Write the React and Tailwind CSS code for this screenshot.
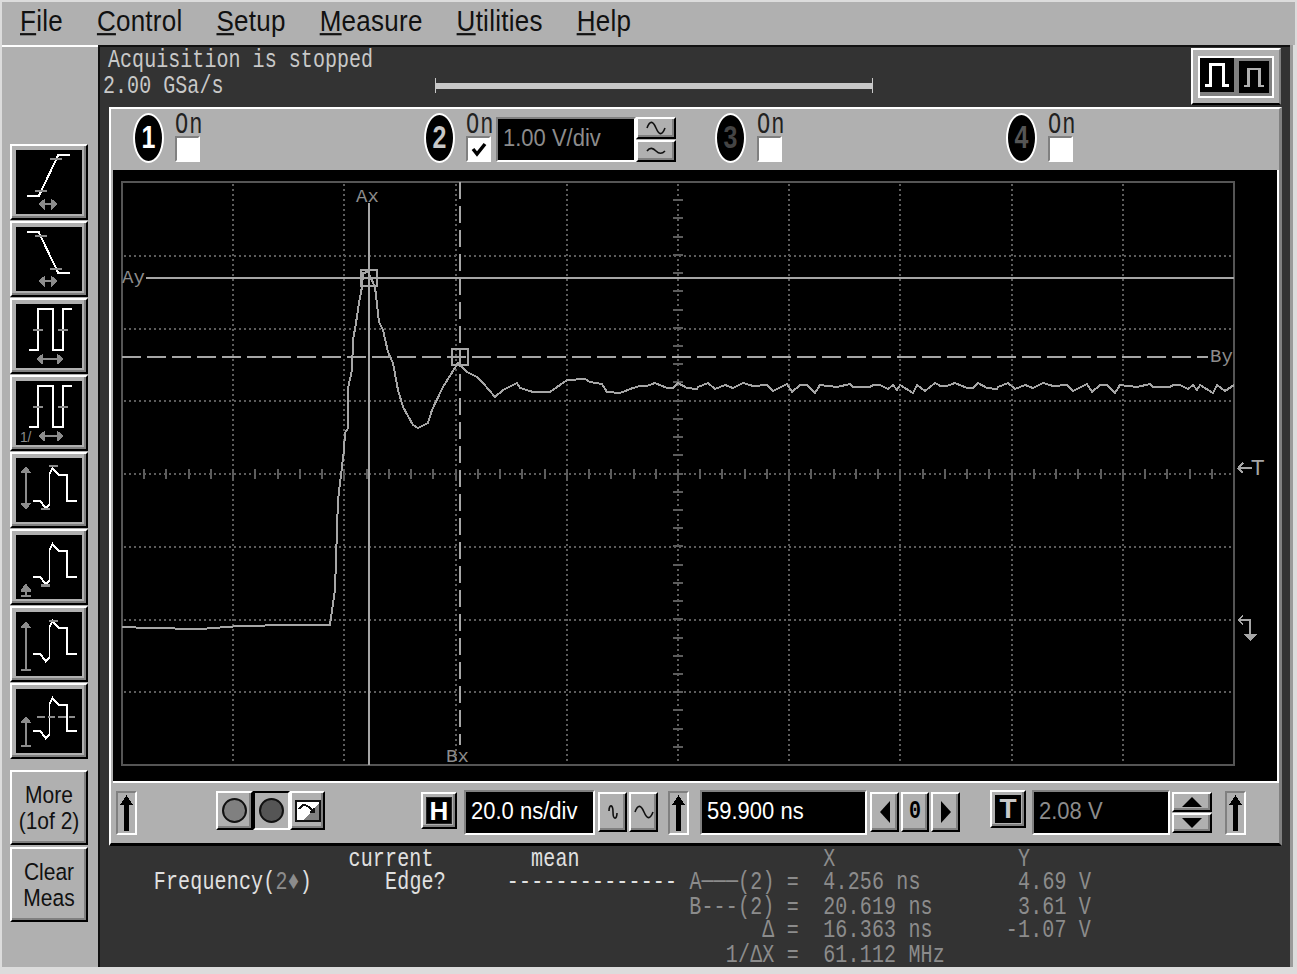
import React from 'react';

const sp = (n) => ' '.repeat(n);
const GRAY = '#8c8c8c';

// trace points read off the picture
const tracePts = [
  [122, 627], [150, 628], [200, 629], [240, 626], [290, 625], [330, 625], [335, 590], [338, 500], [344, 450], [345, 433],
  [348, 428], [348, 388], [352, 370], [353, 340], [356, 323], [359, 303], [362, 287], [363, 273], [368, 272], [375, 287],
  [379, 322], [383, 330], [388, 352], [393, 363], [398, 390], [403, 407], [413, 425], [418, 428], [428, 423], [432, 410],
  [443, 387], [458, 363], [467, 372], [477, 377], [483, 383], [495, 397], [503, 390], [517, 383], [520, 388], [533, 392],
  [550, 392], [567, 380], [585, 379], [590, 382], [602, 384], [607, 392], [620, 393], [633, 388],
];
const ripple = [
  [0, 386], [7, 386], [15, 383], [27, 388], [33, 388], [38, 383], [47, 388], [57, 389], [58, 387], [68, 383], [75, 389],
  [85, 385], [93, 388], [103, 383], [113, 386], [127, 385], [133, 391], [147, 384], [152, 392], [160, 385], [167, 385],
  [175, 393], [180, 385], [197, 387], [210, 384], [213, 387], [230, 387], [233, 385], [240, 385], [248, 389], [253, 385],
  [257, 390], [260, 385], [273, 393], [277, 385], [285, 391], [295, 383], [299, 385],
];
[0, 300].forEach((off) => {
  ripple.forEach(([x, y]) => {
    if (640 + off + x <= 1234) tracePts.push([640 + off + x, y]);
  });
});
tracePts.push([1234, 385]);
const tracePath = tracePts.map((p) => p.join(',')).join(' ');

const vDivs = [233, 344, 456, 567, 789, 900, 1012, 1123];
const hDivs = [256, 329, 401, 547, 620, 692];
const vTicks = Array.from({ length: 31 }, (_, i) => 182 + (i + 1) * 18.22);
const hTicks = Array.from({ length: 49 }, (_, i) => 122 + (i + 1) * 22.24);

function Scope() {
  return (
    <svg viewBox="113 170 1164 611" className="block w-[1164px] h-[611px]" shapeRendering="crispEdges" fontFamily="'Liberation Mono', monospace" fontSize="19">
      <rect x="122" y="182" width="1112" height="583" fill="none" stroke="#555555" strokeWidth="2" />
      {vDivs.map((x) => <line key={x} x1={x} x2={x} y1="184" y2="764" stroke="#5c5c5c" strokeWidth="2" strokeDasharray="2 3" />)}
      {hDivs.map((y) => <line key={y} x1="124" x2="1232" y1={y} y2={y} stroke="#5c5c5c" strokeWidth="2" strokeDasharray="2 3" />)}
      <line x1="678" x2="678" y1="184" y2="764" stroke="#5c5c5c" strokeWidth="2" strokeDasharray="2 3" />
      <line x1="124" x2="1232" y1="474" y2="474" stroke="#5c5c5c" strokeWidth="2" strokeDasharray="2 3" />
      {vTicks.map((y) => <line key={y} x1="673" x2="683" y1={y} y2={y} stroke="#5c5c5c" strokeWidth="2" />)}
      {hTicks.map((x) => <line key={x} x1={x} x2={x} y1="469" y2="479" stroke="#5c5c5c" strokeWidth="2" />)}
      <polyline points={tracePath} fill="none" stroke="#a6a6a6" strokeWidth="2" />
      <line x1="369" x2="369" y1="203" y2="765" stroke="#a6a6a6" strokeWidth="2" />
      <line x1="146" x2="1234" y1="278" y2="278" stroke="#a6a6a6" strokeWidth="2" />
      <line x1="460" x2="460" y1="182" y2="745" stroke="#a6a6a6" strokeWidth="2" strokeDasharray="17 7" />
      <line x1="122" x2="1208" y1="357" y2="357" stroke="#a6a6a6" strokeWidth="2" strokeDasharray="19 6" />
      <rect x="361" y="270" width="16" height="16" fill="none" stroke="#a6a6a6" strokeWidth="2" />
      <rect x="452" y="349" width="16" height="16" fill="none" stroke="#a6a6a6" strokeWidth="2" />
      <text x="356" y="202" fill="#8c8c8c">Ax</text>
      <text x="122" y="283" fill="#8c8c8c">Ay</text>
      <text x="1210" y="362" fill="#8c8c8c">By</text>
      <text x="446" y="762" fill="#8c8c8c">Bx</text>
      <path d="M1238 468H1252M1238 468L1243 463M1238 468L1243 473" fill="none" stroke="#a6a6a6" strokeWidth="1.5" />
      <text x="1251" y="475" fill="#a6a6a6" fontSize="22" fontFamily="'Liberation Sans', sans-serif">T</text>
      <path d="M1238 620H1250V634M1238 620L1243 616M1238 620L1243 624" fill="none" stroke="#a6a6a6" strokeWidth="1.5" />
      <polygon points="1243,634 1257,634 1250,641" fill="#a6a6a6" />
    </svg>
  );
}

const PULSE = '0,0 8,0 13,7 17,3 17,-28 20,-34 26,-27 35,-27 35,0 45,0';

function IconFrame({ children }) {
  return (
    <svg viewBox="0 0 65 65" className="block w-full h-full" shapeRendering="crispEdges" fill="none">
      {children}
    </svg>
  );
}

function VArrow({ y1, y2, top = true, bottomHead = false, bar = false }) {
  return (
    <g stroke={GRAY} fill={GRAY}>
      <line x1="9" x2="9" y1={y1} y2={y2} strokeWidth="2" />
      {top && <polygon points={`9,${y1} 14,${y1 + 6} 4,${y1 + 6}`} />}
      {bottomHead && <polygon points={`9,${y2} 14,${y2 - 6} 4,${y2 - 6}`} />}
      {bar && <line x1="4" x2="14" y1={y2} y2={y2} strokeWidth="2" />}
    </g>
  );
}

function HArrow({ x1, x2, y = 55 }) {
  return (
    <g stroke={GRAY} fill={GRAY}>
      <line x1={x1} x2={x2} y1={y} y2={y} strokeWidth="2" />
      <polygon points={`${x1},${y} ${x1 + 6},${y - 5} ${x1 + 6},${y + 5}`} />
      <polygon points={`${x2},${y} ${x2 - 6},${y - 5} ${x2 - 6},${y + 5}`} />
    </g>
  );
}

const icons = [
  <IconFrame key="rise">
    <polyline points="10,47 22,47 42,5 54,5" stroke="#fff" strokeWidth="2" />
    <path d="M34 9H46M18 42H30" stroke={GRAY} strokeWidth="2" />
    <HArrow x1={22} x2={41} />
  </IconFrame>,
  <IconFrame key="fall">
    <polyline points="10,5 22,5 42,47 54,47" stroke="#fff" strokeWidth="2" />
    <path d="M18 9H30M34 43H46" stroke={GRAY} strokeWidth="2" />
    <HArrow x1={22} x2={41} />
  </IconFrame>,
  <IconFrame key="period">
    <polyline points="12,47 21,47 21,5 37,5 37,47 47,47 47,5 56,5" stroke="#fff" strokeWidth="2" />
    <path d="M16 26H26M42 26H52" stroke={GRAY} strokeWidth="2" />
    <HArrow x1={20} x2={47} y={56} />
  </IconFrame>,
  <IconFrame key="freq">
    <polyline points="12,47 21,47 21,5 37,5 37,47 47,47 47,5 56,5" stroke="#fff" strokeWidth="2" />
    <path d="M16 26H26M42 26H52" stroke={GRAY} strokeWidth="2" />
    <text x="3" y="62" fill={GRAY} stroke="none" fontSize="14" fontFamily="'Liberation Sans', sans-serif">1/</text>
    <HArrow x1={22} x2={47} y={56} />
  </IconFrame>,
  <IconFrame key="pp">
    <polyline points={PULSE} transform="translate(16 44)" stroke="#fff" strokeWidth="2" />
    <path d="M32 8H42M24 52H34" stroke={GRAY} strokeWidth="2" />
    <VArrow y1={9} y2={52} bottomHead />
  </IconFrame>,
  <IconFrame key="min">
    <polyline points={PULSE} transform="translate(16 43)" stroke="#fff" strokeWidth="2" />
    <path d="M24 51H34" stroke={GRAY} strokeWidth="3" />
    <VArrow y1={50} y2={62} bar />
    <path d="M4 57H14" stroke={GRAY} strokeWidth="2" />
  </IconFrame>,
  <IconFrame key="max">
    <polyline points={PULSE} transform="translate(16 43)" stroke="#fff" strokeWidth="2" />
    <path d="M32 9H42" stroke={GRAY} strokeWidth="2" />
    <VArrow y1={10} y2={59} bar />
  </IconFrame>,
  <IconFrame key="avg">
    <polyline points={PULSE} transform="translate(16 43)" stroke="#fff" strokeWidth="2" />
    <path d="M20 28H59" stroke={GRAY} strokeWidth="2" strokeDasharray="8 3" />
    <VArrow y1={28} y2={58} bar />
  </IconFrame>,
];

const raised = 'border-2 border-t-white border-l-white border-b-black border-r-black bg-[#b0b0b0] shadow-[inset_-2px_-2px_0_#808080]';
const sunken = 'border-2 border-t-[#808080] border-l-[#808080] border-b-white border-r-white';

function SideButton({ children }) {
  return (
    <div className={`w-[78px] h-[76px] p-[4px] ${raised}`}>
      <div className="w-full h-full bg-black">{children}</div>
    </div>
  );
}

function TextButton({ lines }) {
  return (
    <div className={`w-[78px] h-[75px] flex flex-col items-center justify-center text-[21px] leading-[26px] text-[#111] ${raised}`}>
      {lines.map((l) => <span key={l} className="block scale-y-[1.15]">{l}</span>)}
    </div>
  );
}

function Channel({ n, color, checked, children }) {
  return (
    <div className="flex items-start">
      <div className="mt-[4px] w-[31px] h-[50px] rounded-[50%] bg-black border-2 border-white flex items-center justify-center font-bold text-[25px]" style={{ color }}>
        <span className="block scale-y-[1.25]">{n}</span>
      </div>
      <div className="ml-[11px] w-[30px] flex flex-col">
        <span className="block h-[27px] pt-[6px] leading-[14px] text-[22px] text-[#222] font-['Liberation_Mono',monospace] origin-top scale-y-[1.35] tracking-[1px]">On</span>
        <div className={`w-[25px] h-[26px] bg-white ${sunken} flex items-center justify-center`}>
          {checked && (
            <svg viewBox="0 0 18 18" className="w-[18px] h-[18px]">
              <path d="M3 9L7 14L15 4" fill="none" stroke="#000" strokeWidth="3.5" />
            </svg>
          )}
        </div>
      </div>
      {children}
    </div>
  );
}

function UpArrow({ className }) {
  return (
    <div className={`w-[21px] h-[44px] flex items-center justify-center ${sunken} ${className}`}>
      <svg viewBox="0 0 15 38" className="w-[15px] h-[38px]" shapeRendering="crispEdges">
        <polygon points="7.5,1 14,11 1,11" fill="#000" />
        <rect x="5" y="10" width="5" height="27" fill="#000" />
      </svg>
    </div>
  );
}

function Readout({ className, text, dim }) {
  return (
    <div className={`h-[45px] bg-black ${sunken} flex items-center pl-[5px] pb-[4px] text-[22px] ${dim ? 'text-[#8c8c8c]' : 'text-white'} ${className}`}>
      <span className="block scale-y-[1.1] whitespace-pre">{text}</span>
    </div>
  );
}

function SineTall() {
  return (
    <svg viewBox="0 0 10 14" className="w-[10px] h-[14px]">
      <path d="M1 6C1 -1 5 -1 5 7S9 15 9 8" fill="none" stroke="#111" strokeWidth="1.6" />
    </svg>
  );
}

function SineWide() {
  return (
    <svg viewBox="0 0 20 14" className="w-[20px] h-[14px]">
      <path d="M1 7C4 -1 7 0 10 7S16 15 19 7" fill="none" stroke="#111" strokeWidth="1.6" />
    </svg>
  );
}

function SineFlat() {
  return (
    <svg viewBox="0 0 20 8" className="w-[20px] h-[8px]">
      <path d="M1 4C4 0 7 1 10 4S16 7 19 4" fill="none" stroke="#111" strokeWidth="1.6" />
    </svg>
  );
}

export default function App() {
  return (
    <div className="w-[1297px] h-[974px] bg-[#dcdcdc] p-[2px] overflow-hidden font-['Liberation_Sans',sans-serif]">
      <div className="h-full bg-[#b0b0b0] flex flex-col">
        {/* Menu bar */}
        <nav className="h-[43px] shrink-0 flex items-center gap-[34px] pl-[18px] pb-[5px] text-[26px] tracking-[0.25px] leading-none text-[#111]">
          <span className="block scale-y-[1.1]"><u>F</u>ile</span>
          <span className="block scale-y-[1.1]"><u>C</u>ontrol</span>
          <span className="block scale-y-[1.1]"><u>S</u>etup</span>
          <span className="block scale-y-[1.1]"><u>M</u>easure</span>
          <span className="block scale-y-[1.1]"><u>U</u>tilities</span>
          <span className="block scale-y-[1.1]"><u>H</u>elp</span>
        </nav>

        <div className="flex-1 flex min-h-0 border-b-[5px] border-[#dcdcdc]">
          {/* Left measurement buttons */}
          <aside className="w-[96px] shrink-0 border-t-2 border-white pt-[97px] pl-[8px] flex flex-col">
            <div className="flex flex-col gap-[1px]">
              {icons.map((ic) => <SideButton key={ic.key}>{ic}</SideButton>)}
            </div>
            <div className="mt-[11px] flex flex-col gap-[2px]">
              <TextButton lines={['More', '(1of 2)']} />
              <TextButton lines={['Clear', 'Meas']} />
            </div>
          </aside>

          {/* Main dark panel */}
          <main className="w-[1192px] shrink-0 flex flex-col bg-[#333333] border-t-2 border-l-2 border-[#111]">
            <header className="h-[60px] shrink-0 flex items-start font-['Liberation_Mono',monospace] text-[#c8c8c8] text-[20px]">
              <div className="w-[335px] pl-[3px] origin-top scale-y-[1.3] leading-[19.7px] tracking-[0.05px]">
                <div className="pl-[5px]">Acquisition is stopped</div>
                <div>2.00 GSa/s</div>
              </div>
              <div className="mt-[31px] w-[438px] h-[15px] flex items-center border-x border-[#c8c8c8]">
                <div className="w-full h-[6px] bg-[#c8c8c8]" />
              </div>
              <div className="ml-auto mr-[9px] mt-[1px] w-[90px] h-[57px] bg-[#b0b0b0] border-2 border-t-white border-l-white border-b-black border-r-[#808080] flex items-center justify-center">
                <div className="flex border-2 border-white">
                  <div className="w-[36px] h-[38px] bg-black border-b-4 border-r-2 border-[#808080] flex items-center justify-center">
                    <svg viewBox="0 0 24 24" className="w-[26px] h-[26px]" shapeRendering="crispEdges">
                      <path d="M1 22H6V2H18V22H23" fill="none" stroke="#fff" strokeWidth="2.5" />
                    </svg>
                  </div>
                  <div className="w-[36px] h-[38px] bg-black border-[3px] border-[#808080] flex items-center justify-center">
                    <svg viewBox="0 0 24 24" className="w-[22px] h-[22px]" shapeRendering="crispEdges">
                      <path d="M1 22H6V3H18V22H23" fill="none" stroke="#b0b0b0" strokeWidth="2.5" />
                    </svg>
                  </div>
                </div>
              </div>
            </header>

            {/* Gray instrument panel */}
            <div className="ml-[9px] w-[1173px] shrink-0 bg-[#b0b0b0] border-t-2 border-l-2 border-white border-r-[3px] border-r-[#808080] border-b-[3px] border-b-black">
              {/* Channels */}
              <div className="h-[61px] pl-[22px] grid grid-cols-[repeat(4,291px)]">
                <Channel n="1" color="#ffffff" />
                <Channel n="2" color="#c8c8c8" checked>
                  <Readout className="w-[140px] mt-[8px]" text="1.00 V/div" dim />
                  <div className="mt-[8px] flex flex-col gap-[1px]">
                    <div className={`w-[40px] h-[22px] flex items-center justify-center ${raised}`}><SineWide /></div>
                    <div className={`w-[40px] h-[22px] flex items-center justify-center ${raised}`}><SineFlat /></div>
                  </div>
                </Channel>
                <Channel n="3" color="#444444" />
                <Channel n="4" color="#555555" />
              </div>

              {/* Scope */}
              <div className="ml-[2px] w-[1166px] bg-black border-r-2 border-b-2 border-white">
                <Scope />
              </div>

              {/* Bottom controls */}
              <div className="h-[60px] flex items-start pt-[7px]">
                <UpArrow className="ml-[5px] mt-[1px]" />
                <div className="ml-[79px] mt-[1px] flex">
                  <div className={`w-[37px] h-[39px] flex items-center justify-center ${raised}`}>
                    <div className="w-[25px] h-[25px] rounded-full bg-[#808080] border-2 border-[#111]" />
                  </div>
                  <div className="w-[37px] h-[39px] flex items-center justify-center border-2 border-t-black border-l-black border-b-white border-r-white bg-[#b0b0b0]">
                    <div className="w-[25px] h-[25px] rounded-full bg-[#555555] border-2 border-[#111]" />
                  </div>
                  <div className={`w-[35px] h-[39px] flex items-center justify-center ${raised}`}>
                    <svg viewBox="0 0 26 22" className="w-[26px] h-[22px]" shapeRendering="crispEdges">
                      <rect x="1" y="1" width="24" height="20" fill="#fff" stroke="#111" strokeWidth="2" />
                      <polygon points="24,3 24,20 9,20" fill="#808080" />
                      <path d="M4 9C7 4 11 4 15 8L19 12M15 12H19V8" fill="none" stroke="#111" strokeWidth="2" />
                    </svg>
                  </div>
                </div>
                <div className={`ml-[96px] mt-[2px] w-[36px] h-[37px] p-[3px] ${raised}`}>
                  <div className="w-full h-full bg-black border border-[#222] flex items-center justify-center text-white font-bold text-[26px] leading-none">H</div>
                </div>
                <Readout className="ml-[7px] w-[131px]" text="20.0 ns/div" />
                <div className={`ml-[3px] mt-[2px] w-[29px] h-[40px] flex items-center justify-center ${raised}`}><SineTall /></div>
                <div className={`ml-[2px] mt-[2px] w-[29px] h-[40px] flex items-center justify-center ${raised}`}><SineWide /></div>
                <UpArrow className="ml-[10px] mt-[1px]" />
                <Readout className="ml-[11px] w-[167px]" text="59.900 ns" />
                <div className={`ml-[3px] mt-[2px] w-[29px] h-[40px] flex items-center justify-center ${raised}`}>
                  <svg viewBox="0 0 12 24" className="w-[12px] h-[24px]"><polygon points="11,1 11,23 1,12" fill="#000" /></svg>
                </div>
                <div className={`ml-[2px] mt-[2px] w-[28px] h-[40px] flex items-center justify-center font-['Liberation_Mono',monospace] font-bold text-[20px] text-black ${raised}`}>
                  <span className="block scale-y-[1.25]">0</span>
                </div>
                <div className={`ml-[2px] mt-[2px] w-[29px] h-[40px] flex items-center justify-center ${raised}`}>
                  <svg viewBox="0 0 12 24" className="w-[12px] h-[24px]"><polygon points="1,1 1,23 11,12" fill="#000" /></svg>
                </div>
                <div className={`ml-[30px] w-[36px] h-[38px] p-[3px] ${raised}`}>
                  <div className="w-full h-full bg-black flex items-center justify-center text-[#c8c8c8] font-bold text-[28px] leading-none">T</div>
                </div>
                <Readout className="ml-[6px] w-[138px]" text="2.08 V" dim />
                <div className="ml-[2px] mt-[2px] flex flex-col gap-[1px]">
                  <div className={`w-[40px] h-[20px] flex items-center justify-center ${raised}`}>
                    <svg viewBox="0 0 20 10" className="w-[20px] h-[10px]"><polygon points="10,0 20,10 0,10" fill="#000" /></svg>
                  </div>
                  <div className={`w-[40px] h-[20px] flex items-center justify-center ${raised}`}>
                    <svg viewBox="0 0 20 10" className="w-[20px] h-[10px]"><polygon points="0,0 20,0 10,10" fill="#000" /></svg>
                  </div>
                </div>
                <UpArrow className="ml-[13px] mt-[1px]" />
              </div>
            </div>

            {/* Measurement readout, laid out on a character grid */}
            <pre className="flex-1 pl-[5px] pt-[1px] font-['Liberation_Mono',monospace] text-[20px] leading-[18.46px] tracking-[0.17px] origin-top scale-y-[1.3] text-[#8c8c8c]">
              <span className="text-[#e0e0e0]">{sp(20)}current{sp(8)}mean</span>{sp(20)}X{sp(15)}Y{'\n'}
              <span className="text-[#e0e0e0]">{sp(4)}Frequency(<span className="text-[#8c8c8c]">2♦</span>){sp(6)}Edge?{sp(5)}{'-'.repeat(14)}</span>{sp(1)}A───(2) ={sp(2)}4.256 ns{sp(8)}4.69 V{'\n'}
              {sp(48)}B---(2) ={sp(2)}20.619 ns{sp(7)}3.61 V{'\n'}
              {sp(54)}Δ ={sp(2)}16.363 ns{sp(6)}-1.07 V{'\n'}
              {sp(51)}1/ΔX ={sp(2)}61.112 MHz
            </pre>
          </main>

          <div className="flex-1 border-l-[3px] border-[#9a9a9a] border-r-[3px] border-r-[#dcdcdc]" />
        </div>
      </div>
    </div>
  );
}
